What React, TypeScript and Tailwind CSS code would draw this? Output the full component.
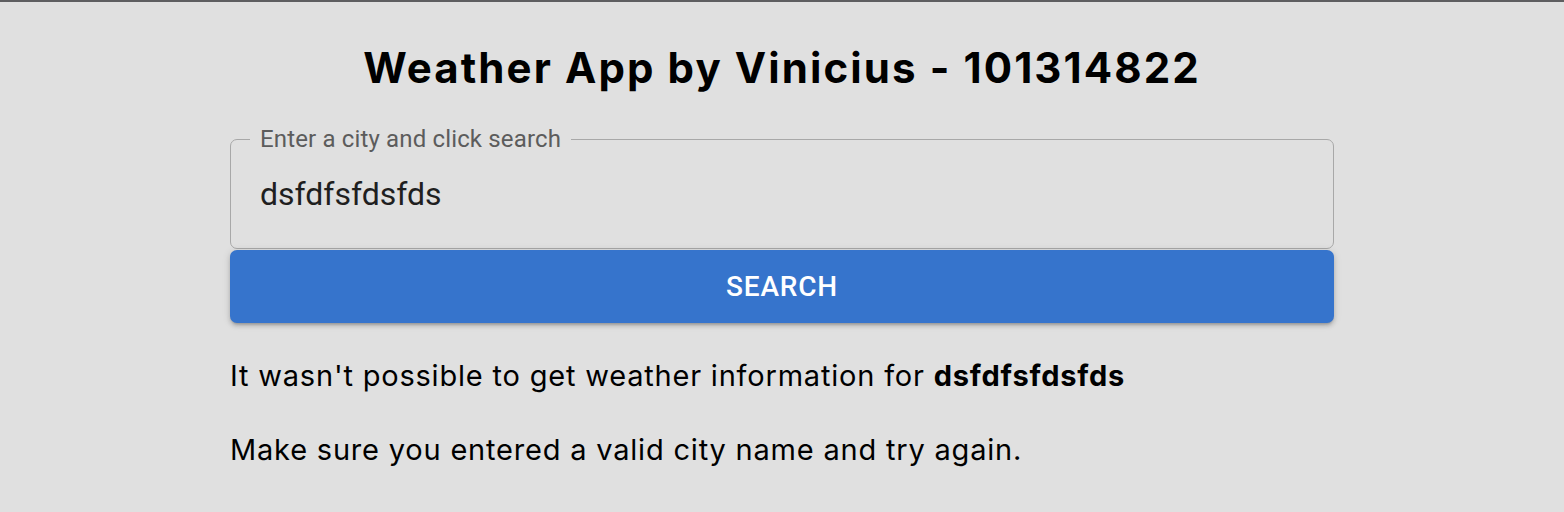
export default function App() {
  return (
    <div className="min-h-[512px] w-full bg-[#e0e0e0] border-t-2 border-[#5e5e60] font-['Inter',sans-serif] text-black">
      <div className="mx-auto flex w-[1104px] flex-col pt-[36px]">
        <h1 className="text-center text-[42px] font-bold leading-[60px] tracking-[2.1px]">
          Weather App by Vinicius - 101314822
        </h1>
        <fieldset className="mt-[29px] h-[122px] rounded-[7px] border-[1.5px] border-[#a8a8a8] px-[19px] font-['Roboto',sans-serif]">
          <legend className="px-[10px] text-[24px] leading-[24px] tracking-[0.15px] text-[#5c5c5c]">
            Enter a city and click search
          </legend>
          <div className="pl-[10px] pt-[25px] text-[32px] leading-[36px] text-[#1f1f1f]">
            dsfdfsfdsfds
          </div>
        </fieldset>
        <button className="mt-[1px] h-[73px] w-full rounded-[7px] bg-[#3674cc] font-['Roboto',sans-serif] text-[28px] font-medium tracking-[0.8px] text-white shadow-[0_3px_3px_-2px_rgba(0,0,0,0.2),0_3px_4px_0_rgba(0,0,0,0.14),0_1px_8px_0_rgba(0,0,0,0.12)]">
          SEARCH
        </button>
        <p className="mt-[35px] text-[29px] leading-[36px] tracking-[0.8px]">
          It wasn't possible to get weather information for <b>dsfdfsfdsfds</b>
        </p>
        <p className="mt-[38px] text-[29px] leading-[36px] tracking-[0.8px]">
          Make sure you entered a valid city name and try again.
        </p>
      </div>
    </div>
  );
}
